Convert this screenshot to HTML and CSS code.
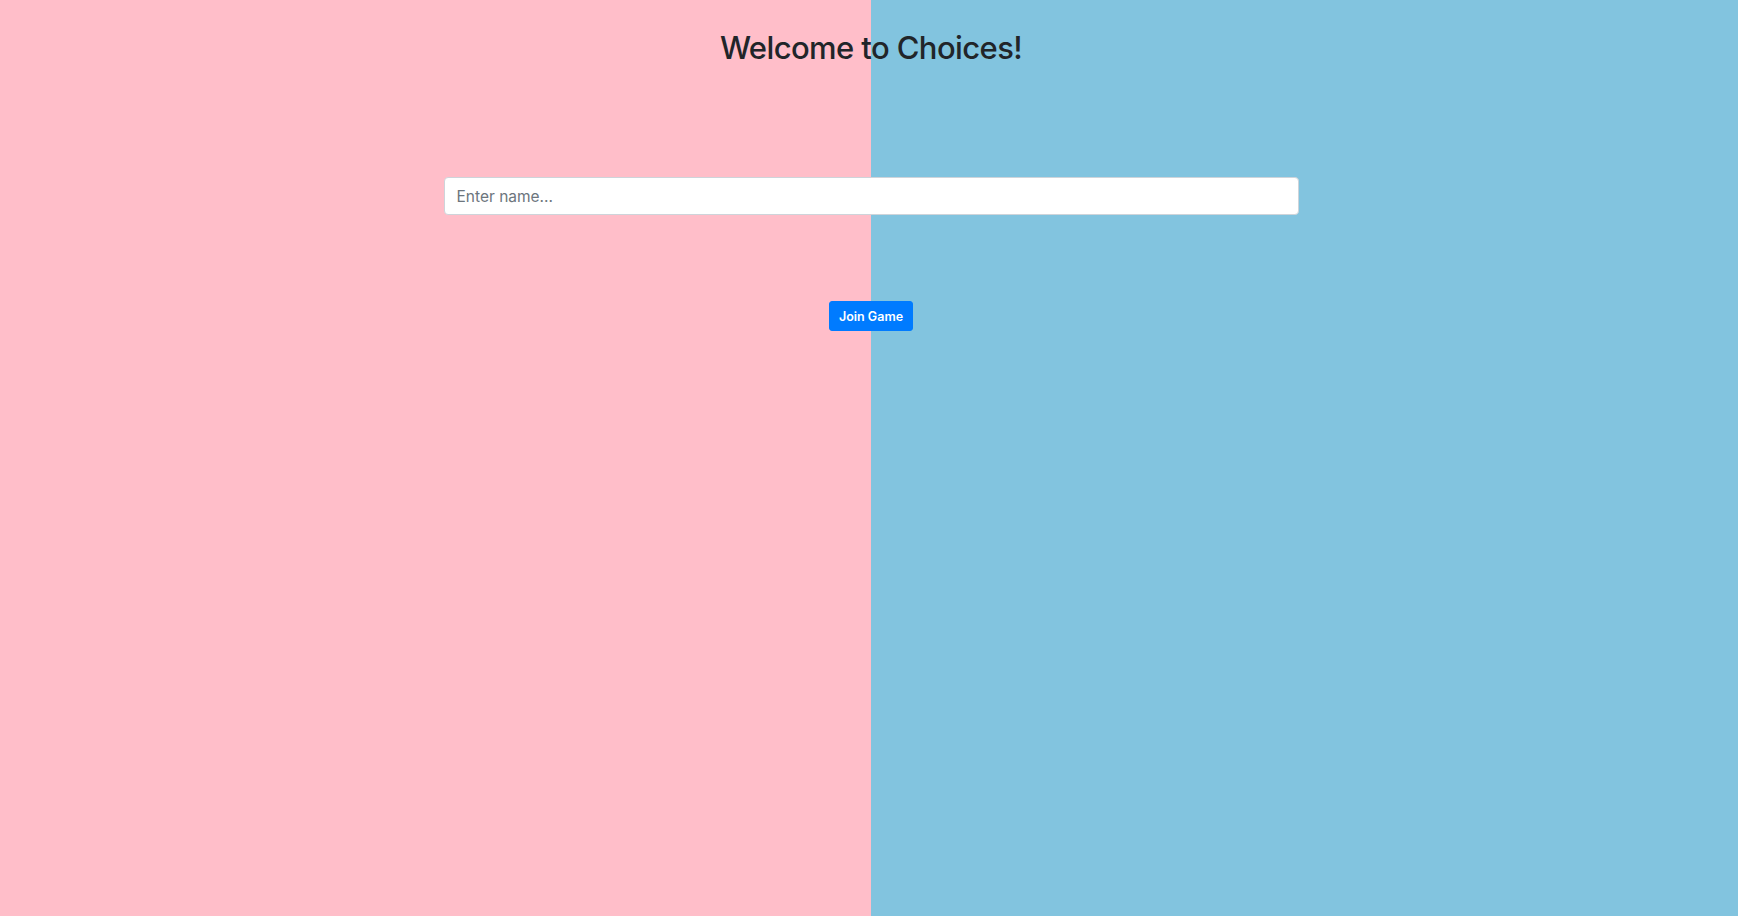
FILE: index.html
```html
<!DOCTYPE html>
<html lang="en">
<head>
<meta charset="utf-8">
<title>Choices</title>
<link rel="stylesheet" href="styles.css">
</head>
<body>
<main class="page">
  <h2 class="title">Welcome to Choices!</h2>
  <form class="join-form">
    <input class="name-input" type="text" placeholder="Enter name...">
    <button class="join-btn" type="button">Join Game</button>
  </form>
</main>
</body>
</html>
```

FILE: styles.css
```css
html, body {
  margin: 0;
  padding: 0;
  height: 100%;
}
body {
  background: linear-gradient(to right, #ffbec9 0, #ffbec9 871px, #82c4df 871px, #82c4df 100%);
  font-family: Inter, "Noto Sans", "Liberation Sans", sans-serif;
  color: #212529;
}
.page {
  display: flex;
  flex-direction: column;
  align-items: center;
  padding-top: 29px;
  padding-left: 4px;
}
.title {
  margin: 0;
  font-size: 31px;
  font-weight: 500;
  line-height: 38px;
  letter-spacing: -0.6px;
}
.join-form {
  display: flex;
  flex-direction: column;
  align-items: center;
  width: 855px;
  margin-top: 110px;
  gap: 86px;
}
.name-input {
  box-sizing: border-box;
  width: 100%;
  height: 38px;
  padding: 0 12px;
  font-family: inherit;
  font-size: 15.5px;
  color: #495057;
  background: #fff;
  border: 1px solid #ced4da;
  border-radius: 4px;
  outline: none;
}
.name-input::placeholder {
  color: #6c757d;
}
.join-btn {
  box-sizing: border-box;
  height: 30px;
  padding: 0 9px;
  font-family: inherit;
  font-size: 12.5px;
  font-weight: 600;
  color: #fff;
  background: #007bff;
  border: 1px solid #007bff;
  border-radius: 3px;
  cursor: pointer;
}
```
